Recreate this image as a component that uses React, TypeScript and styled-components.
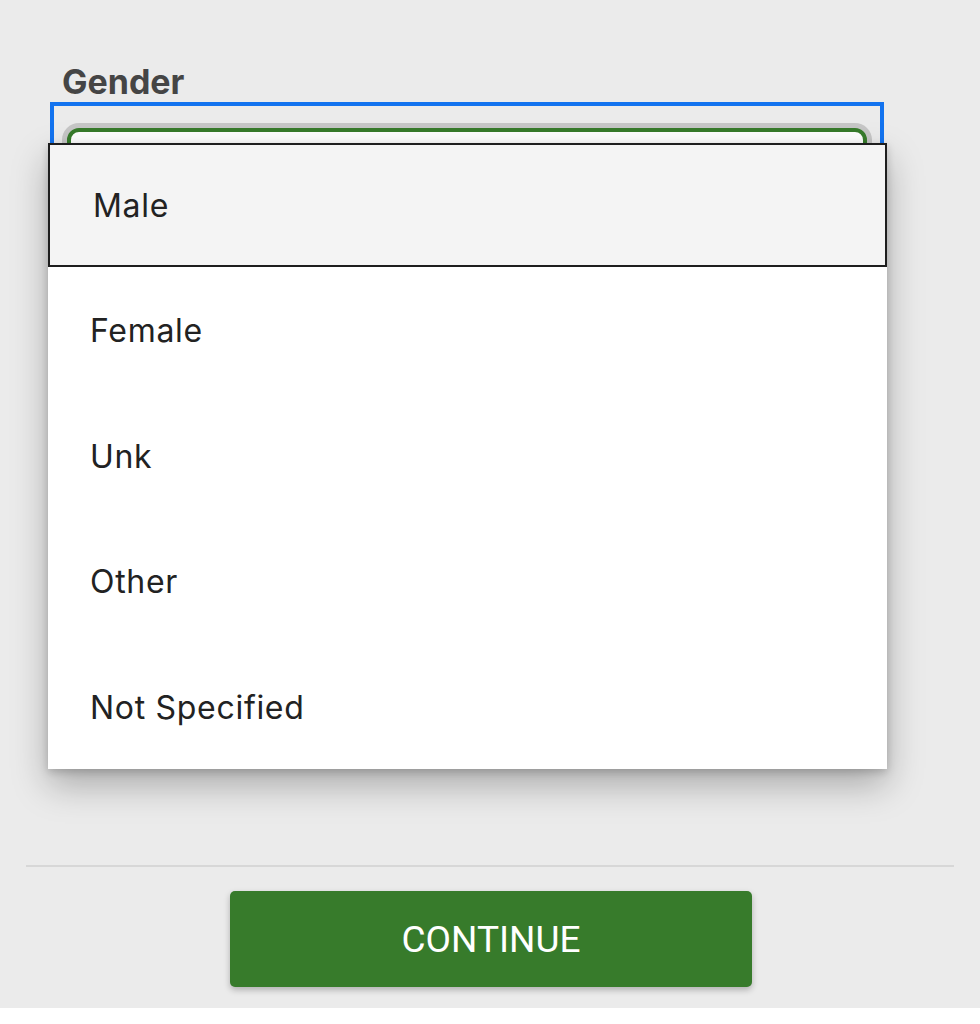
import styled, { createGlobalStyle } from "styled-components";

const options = ["Male", "Female", "Unk", "Other", "Not Specified"];

const GlobalStyle = createGlobalStyle`
  html, body {
    margin: 0;
    padding: 0;
    background: #ffffff;
  }
  * {
    box-sizing: border-box;
  }
  body {
    -webkit-font-smoothing: antialiased;
  }
`;

export default function App() {
  const selected = "Male";

  return (
    <>
      <GlobalStyle />
      <Page>
        <FormBody>
          <Field>
            <Label>Gender</Label>
            <FocusRing>
              <SelectBox />
              <Menu role="listbox">
                {options.map((option) => (
                  <MenuItem
                    key={option}
                    role="option"
                    $active={option === selected}
                  >
                    {option}
                  </MenuItem>
                ))}
              </Menu>
            </FocusRing>
          </Field>
        </FormBody>
        <Divider />
        <Footer>
          <ContinueButton>CONTINUE</ContinueButton>
        </Footer>
      </Page>
    </>
  );
}

const Page = styled.div`
  width: 980px;
  height: 1008px;
  background: #ebebeb;
  padding: 0 26px;
  display: flex;
  flex-direction: column;
`;

const FormBody = styled.div`
  height: 865px;
  padding-top: 62px;
`;

const Field = styled.div`
  margin-left: 24px;
  width: 834px;
  display: flex;
  flex-direction: column;
`;

const Label = styled.label`
  padding-left: 12px;
  height: 40px;
  font-family: Inter, "Noto Sans", sans-serif;
  font-size: 34px;
  line-height: 40px;
  font-weight: 700;
  color: #454545;
`;

const FocusRing = styled.div`
  position: relative;
  border: 4px solid #1373ef;
  padding: 17px 8px;
`;

const SelectBox = styled.div`
  height: 88px;
  border: 4px solid #377b2b;
  border-radius: 12px;
  margin: 5px;
  background: #ffffff;
  box-shadow: 0 0 0 5px #c6c6c6;
`;

const Menu = styled.ul`
  position: absolute;
  top: 37px;
  left: -6px;
  width: 839px;
  margin: 0;
  padding: 0;
  list-style: none;
  background: #ffffff;
  box-shadow: 0 16px 34px rgba(0, 0, 0, 0.28), 0 3px 8px rgba(0, 0, 0, 0.18);
`;

const MenuItem = styled.li<{ $active?: boolean }>`
  height: ${(p) => (p.$active ? "124px" : "125.5px")};
  display: flex;
  align-items: center;
  padding-top: ${(p) => (p.$active ? "0" : "2px")};
  padding-left: ${(p) => (p.$active ? "43px" : "42px")};
  font-family: Inter, "Noto Sans", sans-serif;
  font-size: 32px;
  letter-spacing: 0.7px;
  color: #222222;
  background: ${(p) => (p.$active ? "#f4f4f4" : "#ffffff")};
  border: ${(p) => (p.$active ? "2px solid #1e1e1e" : "none")};
`;

const Divider = styled.div`
  height: 2px;
  background: #d7d7d7;
`;

const Footer = styled.div`
  display: flex;
  justify-content: center;
  padding: 24px 0 21px;
`;

const ContinueButton = styled.button`
  width: 522px;
  height: 96px;
  margin-left: 2px;
  border: none;
  border-radius: 5px;
  background: #377b2b;
  color: #ffffff;
  font-family: Roboto, "Liberation Sans", sans-serif;
  font-size: 37px;
  font-weight: 400;
  box-shadow: 0 3px 6px rgba(0, 0, 0, 0.25);
  cursor: pointer;
`;
